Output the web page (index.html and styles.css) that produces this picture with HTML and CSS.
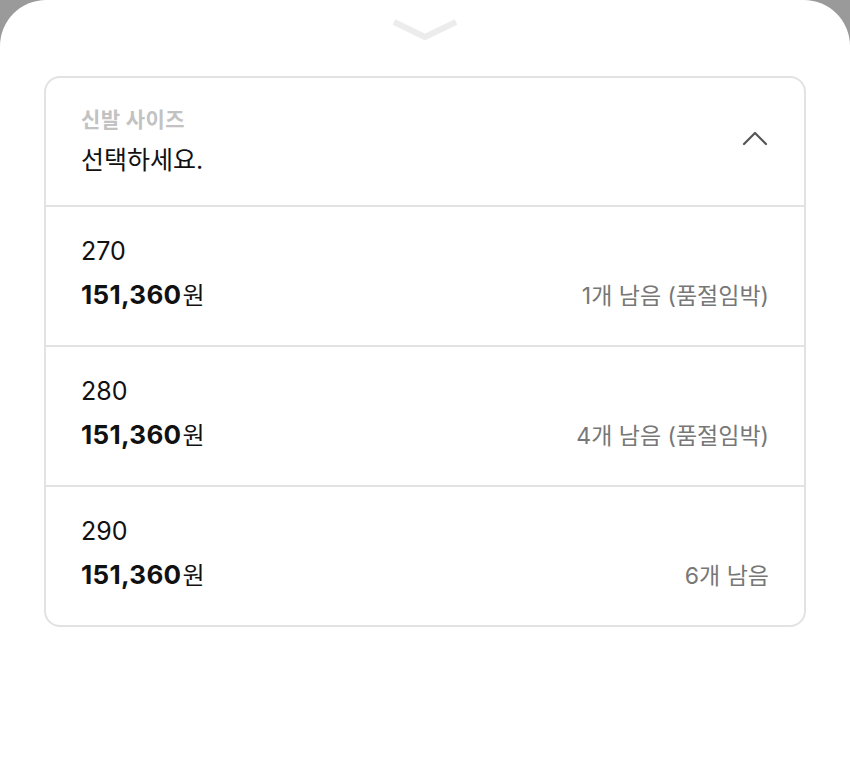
FILE: index.html
```html
<!DOCTYPE html>
<html lang="ko">
<head>
    <meta charset="UTF-8">
    <meta name="viewport" content="width=device-width, initial-scale=1.0">
    <title>신발 사이즈 선택</title>
    <link rel="stylesheet" href="styles.css">
</head>
<body>
    <div class="sheet">
        <div class="sheet-handle">
            <svg width="70" height="26" viewBox="0 0 70 26">
                <path d="M4 6 L35 21 L66 6" fill="none" stroke="#ececec" stroke-width="6" stroke-linejoin="round"/>
            </svg>
        </div>

        <div class="select-box">
            <div class="select-header">
                <div>
                    <div class="select-label">신발 사이즈</div>
                    <div class="select-value">선택하세요.</div>
                </div>
                <svg class="toggle" width="28" height="18" viewBox="0 0 28 18">
                    <path d="M3 15 L14 4 L25 15" fill="none" stroke="#555" stroke-width="2.2" stroke-linecap="round" stroke-linejoin="round"/>
                </svg>
            </div>

            <div class="option">
                <div class="option-size">270</div>
                <div class="option-line">
                    <span class="price"><b>151,360</b>원</span>
                    <span class="stock">1개 남음 (품절임박)</span>
                </div>
            </div>
            <div class="option">
                <div class="option-size">280</div>
                <div class="option-line">
                    <span class="price"><b>151,360</b>원</span>
                    <span class="stock">4개 남음 (품절임박)</span>
                </div>
            </div>
            <div class="option">
                <div class="option-size">290</div>
                <div class="option-line">
                    <span class="price"><b>151,360</b>원</span>
                    <span class="stock">6개 남음</span>
                </div>
            </div>
        </div>
    </div>
</body>
</html>
```

FILE: styles.css
```css
html, body {
    height: 100%;
}

body {
    margin: 0;
    background-color: #9a9a9a;
    font-family: Inter, "Noto Sans CJK KR", "Noto Sans", sans-serif;
    color: #111;
}

.sheet {
    height: 100%;
    background-color: #fff;
    border-radius: 46px 46px 0 0;
    padding: 0 44px;
    box-sizing: border-box;
}

.sheet-handle {
    height: 76px;
    display: flex;
    justify-content: center;
    padding-top: 16px;
    box-sizing: border-box;
}

.select-box {
    border: 2px solid #e2e2e2;
    border-radius: 16px;
}

.select-header {
    height: 127px;
    box-sizing: border-box;
    display: flex;
    justify-content: space-between;
    align-items: center;
    padding: 0 35px;
}

.select-label {
    font-size: 21px;
    line-height: 26px;
    font-weight: 700;
    letter-spacing: 0.4px;
    color: #c2c2c2;
}

.select-value {
    margin-top: 10px;
    font-size: 25px;
    line-height: 34px;
    color: #111;
}

.toggle {
    margin-bottom: 8px;
}

.option {
    height: 140px;
    box-sizing: border-box;
    border-top: 2px solid #e2e2e2;
    padding: 26px 35px 0 35px;
}

.option-size {
    font-size: 25px;
    line-height: 36px;
}

.option-line {
    margin-top: 7px;
    display: flex;
    justify-content: space-between;
    align-items: center;
    line-height: 38px;
}

.price {
    font-size: 24px;
}

.price b {
    font-size: 26px;
    font-weight: 700;
    letter-spacing: 0.3px;
    margin-right: 1px;
}

.stock {
    font-size: 23px;
    color: #777;
}
```
